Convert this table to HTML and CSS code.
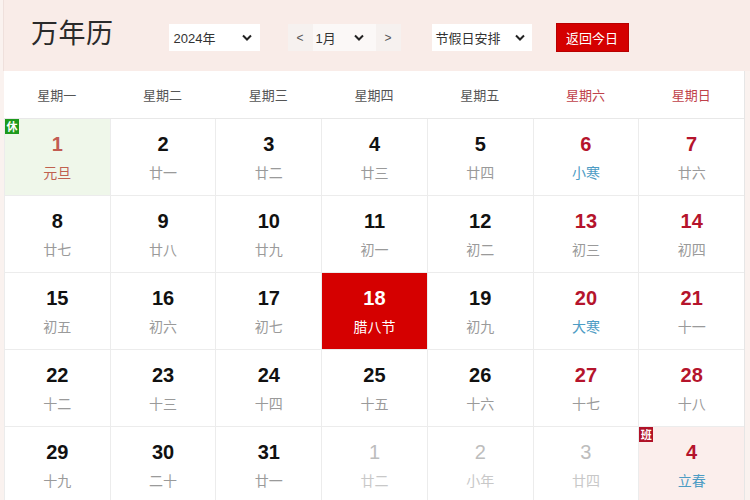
FILE: index.html
```html
<!DOCTYPE html>
<html lang="zh-CN">
<head>
<meta charset="utf-8">
<title>万年历</title>
<link rel="stylesheet" href="styles.css">
</head>
<body>
<div class="page">
  <header class="topbar">
    <h1 class="title">万年历</h1>
    <div class="select year-select"><span>2024年</span><svg class="chev" viewBox="0 0 10 6"><polyline points="1,1 5,5 9,1"/></svg></div>
    <div class="month-group">
      <span class="arrow">&lt;</span>
      <div class="select month-select"><span>1月</span><svg class="chev" viewBox="0 0 10 6"><polyline points="1,1 5,5 9,1"/></svg></div>
      <span class="arrow">&gt;</span>
    </div>
    <div class="select holiday-select"><span>节假日安排</span><svg class="chev" viewBox="0 0 10 6"><polyline points="1,1 5,5 9,1"/></svg></div>
    <button class="today-btn">返回今日</button>
  </header>
  <main class="calendar">
    <div class="weekdays">
      <span>星期一</span><span>星期二</span><span>星期三</span><span>星期四</span><span>星期五</span><span class="we">星期六</span><span class="we">星期日</span>
    </div>
    <div class="grid">
      <div class="cell holiday"><span class="badge rest">休</span><b>1</b><i>元旦</i></div>
      <div class="cell"><b>2</b><i>廿一</i></div>
      <div class="cell"><b>3</b><i>廿二</i></div>
      <div class="cell"><b>4</b><i>廿三</i></div>
      <div class="cell"><b>5</b><i>廿四</i></div>
      <div class="cell weekend"><b>6</b><i class="term">小寒</i></div>
      <div class="cell weekend"><b>7</b><i>廿六</i></div>

      <div class="cell"><b>8</b><i>廿七</i></div>
      <div class="cell"><b>9</b><i>廿八</i></div>
      <div class="cell"><b>10</b><i>廿九</i></div>
      <div class="cell"><b>11</b><i>初一</i></div>
      <div class="cell"><b>12</b><i>初二</i></div>
      <div class="cell weekend"><b>13</b><i>初三</i></div>
      <div class="cell weekend"><b>14</b><i>初四</i></div>

      <div class="cell"><b>15</b><i>初五</i></div>
      <div class="cell"><b>16</b><i>初六</i></div>
      <div class="cell"><b>17</b><i>初七</i></div>
      <div class="cell today"><b>18</b><i>腊八节</i></div>
      <div class="cell"><b>19</b><i>初九</i></div>
      <div class="cell weekend"><b>20</b><i class="term">大寒</i></div>
      <div class="cell weekend"><b>21</b><i>十一</i></div>

      <div class="cell"><b>22</b><i>十二</i></div>
      <div class="cell"><b>23</b><i>十三</i></div>
      <div class="cell"><b>24</b><i>十四</i></div>
      <div class="cell"><b>25</b><i>十五</i></div>
      <div class="cell"><b>26</b><i>十六</i></div>
      <div class="cell weekend"><b>27</b><i>十七</i></div>
      <div class="cell weekend"><b>28</b><i>十八</i></div>

      <div class="cell"><b>29</b><i>十九</i></div>
      <div class="cell"><b>30</b><i>二十</i></div>
      <div class="cell"><b>31</b><i>廿一</i></div>
      <div class="cell other"><b>1</b><i>廿二</i></div>
      <div class="cell other"><b>2</b><i>小年</i></div>
      <div class="cell other"><b>3</b><i>廿四</i></div>
      <div class="cell workday"><span class="badge work">班</span><b>4</b><i class="term">立春</i></div>
    </div>
  </main>
</div>
</body>
</html>
```
FILE: styles.css
```css
* { box-sizing: border-box; }
html, body { margin: 0; padding: 0; }
body {
  background: #faf2ef;
  font-family: "Liberation Sans", "Noto Sans CJK SC", sans-serif;
  color: #222;
  width: 750px;
  height: 500px;
  overflow: hidden;
}
.page { width: 750px; }
.topbar {
  height: 71px;
  background: #f9ece8;
  display: flex;
  align-items: center;
  padding-left: 27px;
  padding-top: 4px;
  border-left: 1px solid #efe0dc;
  margin-left: 3px;
}
.title {
  margin: 0 55px 0 0;
  font-family: "Noto Sans CJK SC", sans-serif;
  font-weight: 400;
  font-size: 27px;
  color: #2a2a2a;
  letter-spacing: 0.5px;
  line-height: 1;
  position: relative;
  top: -6px;
}
.select {
  height: 27px;
  background: #fff;
  display: flex;
  align-items: center;
  justify-content: space-between;
  font-size: 13px;
  color: #333;
  font-family: "Liberation Sans", "Noto Sans CJK SC", sans-serif;
}
.chev { width: 10px; height: 7px; }
.chev polyline { fill: none; stroke: #222; stroke-width: 2; }
.year-select { width: 91px; padding: 0 8px 0 5px; margin-right: 28px; }
.month-group {
  display: flex;
  align-items: center;
  height: 27px;
  background: #f6f1ef;
  width: 113px;
  margin-right: 31px;
}
.arrow {
  width: 25px;
  text-align: center;
  font-size: 12px;
  color: #555;
}
.month-select { width: 63px; padding: 0 12px 0 3px; background: #fbf8f7; }
.holiday-select { width: 100px; padding: 0 7px 0 4px; margin-right: 24px; }
.today-btn {
  height: 29px;
  width: 73px;
  border: 1px solid #b80000;
  background: #d40000;
  color: #fff;
  font-family: "Noto Sans CJK SC", sans-serif;
  font-size: 13px;
  padding: 0;
  margin-top: -1px;
}
.calendar {
  margin-left: 4px;
  width: 741px;
  background: #fff;
  border-right: 1px solid #e6e6e6;
}
.weekdays {
  display: grid;
  grid-template-columns: repeat(7, 1fr);
  height: 48px;
  align-items: center;
  text-align: center;
  font-family: "Noto Sans CJK SC", sans-serif;
  font-size: 13px;
  color: #555;
  border-bottom: 1px solid #e8e8e8;
}
.weekdays .we { color: #c0414a; }
.grid {
  display: grid;
  grid-template-columns: repeat(7, 1fr);
  grid-auto-rows: 76px;
  gap: 1px;
  background: #ececec;
  padding: 0 0 0 1px;
}
.cell {
  background: #fff;
  position: relative;
  display: flex;
  flex-direction: column;
  align-items: center;
  padding-top: 13px;
}
.cell b {
  font-family: "Liberation Sans", sans-serif;
  font-weight: 700;
  font-size: 20px;
  line-height: 24px;
  color: #111;
}
.cell i {
  font-style: normal;
  font-family: "Noto Sans CJK SC", sans-serif;
  font-size: 14px;
  line-height: 20px;
  margin-top: 6px;
  color: #9a9a9a;
}
.cell.weekend b { color: #b5142c; }
.cell i.term { color: #4d9cc4; }
.cell.holiday { background: #eff7ea; }
.cell.holiday b { color: #c25c52; }
.cell.holiday i { color: #c0614f; }
.cell.today { background: #d50000; }
.cell.today b, .cell.today i { color: #fff; }
.cell.other b { color: #bdbdbd; font-weight: 400; }
.cell.other i { color: #c8c8c8; }
.cell.workday { background: #fbeeec; }
.cell.workday b { color: #b5142c; }
.badge {
  position: absolute;
  left: 0;
  top: 0;
  width: 14px;
  height: 15px;
  font-family: "Noto Sans CJK SC", sans-serif;
  font-size: 11px;
  line-height: 15px;
  text-align: center;
  color: #fff;
  font-weight: 700;
}
.badge.rest { background: #1d9a1d; }
.badge.work { background: #b01228; }
```
